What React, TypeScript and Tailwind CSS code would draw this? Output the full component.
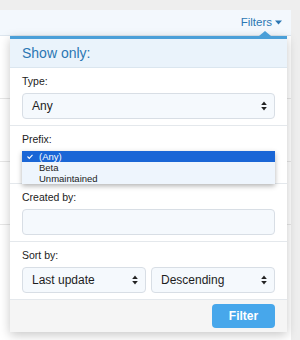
import React from "react";

const SelectArrows: React.FC = () => (
  <svg width="6" height="10" viewBox="0 0 6 10" className="shrink-0">
    <path d="M3 0.5 L5.8 4 H0.2 Z" fill="#222" />
    <path d="M3 9.5 L5.8 6 H0.2 Z" fill="#222" />
  </svg>
);

const FakeSelect: React.FC<{ value: string; className?: string }> = ({ value, className }) => (
  <div
    className={
      "h-[26px] flex items-center justify-between pl-[9px] pr-[7px] rounded-[4px] border border-[#d8dee5] bg-[#f5f9fd] text-[12px] text-[#1d1d1d] " +
      (className ?? "")
    }
  >
    <span>{value}</span>
    <SelectArrows />
  </div>
);

const Section: React.FC<{ label: string; children: React.ReactNode }> = ({ label, children }) => (
  <div className="px-3 pt-[7px] pb-[6px] border-b border-[#e4e8ec]">
    <div className="h-[13px] leading-[13px] text-[10.5px] text-[#222] mb-[5px]">{label}</div>
    {children}
  </div>
);

const App: React.FC = () => {
  const bgRows = [100, 162, 226];
  return (
    <div
      className="w-[300px] h-[340px] bg-[#eeeeee] relative overflow-hidden"
      style={{ fontFamily: '"Liberation Sans", Arial, sans-serif' }}
    >
      {/* underlying page */}
      <div className="mt-[10px] w-[291px] h-[330px] bg-white flex flex-col">
        <div className="h-[26px] bg-[#f3f8fd] border-b border-[#dde6ee] flex items-center justify-end pr-[9px] text-[11.5px] text-[#2b77b3]">
          Filters
          <svg width="7" height="5" viewBox="0 0 7 5" className="ml-[3px]">
            <path d="M0 0.5 H7 L3.5 4.5 Z" fill="#2b77b3" />
          </svg>
        </div>
        {bgRows.map((y) => (
          <div key={y} className="h-[63px] border-b border-[#e6e6e6]" />
        ))}
      </div>

      {/* popup */}
      <div className="absolute left-[10px] top-[36px] w-[277px] bg-white border-t-[3px] border-[#4a9fd8] shadow-[0_3px_10px_rgba(0,0,0,0.22)]">
        <div className="absolute -top-[8px] left-[249px] w-0 h-0 border-l-[6px] border-r-[6px] border-b-[5px] border-l-transparent border-r-transparent border-b-[#4a9fd8]" />
        <div className="h-[29px] bg-[#eaf3fb] border-b border-[#dbe6ef] flex items-center px-3 text-[14px] text-[#2b77b3]">
          Show only:
        </div>
        <Section label="Type:">
          <FakeSelect value="Any" />
        </Section>
        <Section label="Prefix:">
          <div className="relative">
            <FakeSelect value="" />
            {/* open native list */}
            <div className="absolute left-0 top-0 w-full bg-[#eef5fd] shadow-[0_2px_5px_rgba(0,0,0,0.3)] text-[9.5px] leading-[11px] text-[#222]">
              <div className="h-[11px] bg-[#1a66d6] text-white flex items-center">
                <svg width="17" height="11" viewBox="0 0 17 11" className="shrink-0">
                  <path d="M5.5 5.5 L7.3 7.4 L10.5 3.8" stroke="#fff" strokeWidth="1.1" fill="none" />
                </svg>
                <span>(Any)</span>
              </div>
              <div className="h-[11px] flex items-center pl-[17px]">Beta</div>
              <div className="h-[11px] flex items-center pl-[17px]">Unmaintained</div>
            </div>
          </div>
        </Section>
        <Section label="Created by:">
          <div className="h-[26px] rounded-[4px] border border-[#d8dee5] bg-[#f5f9fd]" />
        </Section>
        <Section label="Sort by:">
          <div className="flex gap-[5px]">
            <FakeSelect value="Last update" className="flex-1" />
            <FakeSelect value="Descending" className="flex-1" />
          </div>
        </Section>
        <div className="bg-[#f5f5f5] flex justify-end px-3 py-[4px]">
          <div className="w-[63px] h-[24px] rounded-[4px] bg-[#47a7eb] text-white text-[12px] font-bold flex items-center justify-center">
            Filter
          </div>
        </div>
      </div>
    </div>
  );
};

export default App;
